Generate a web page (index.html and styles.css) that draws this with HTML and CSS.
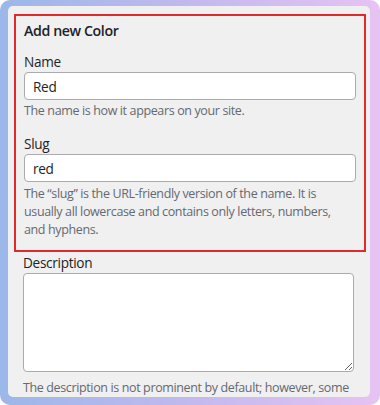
FILE: index.html
```html
<!DOCTYPE html>
<html>
<head>
<meta charset="utf-8">
<link rel="stylesheet" href="styles.css">
</head>
<body>
<div class="frame">
  <div class="panel">
    <div class="highlight">
      <h2 class="title">Add new Color</h2>
      <div class="field">
        <label class="label" for="tag-name">Name</label>
        <input class="text-input" id="tag-name" type="text" value="Red">
        <p class="help">The name is how it appears on your site.</p>
      </div>
      <div class="field field-slug">
        <label class="label" for="tag-slug">Slug</label>
        <input class="text-input" id="tag-slug" type="text" value="red">
        <p class="help">The “slug” is the URL-friendly version of the name. It is usually all lowercase and contains only letters, numbers, and hyphens.</p>
      </div>
    </div>
    <div class="field field-desc">
      <label class="label" for="tag-description">Description</label>
      <textarea class="textarea" id="tag-description"></textarea>
      <p class="help">The description is not prominent by default; however, some themes may show it.</p>
    </div>
  </div>
</div>
</body>
</html>
```

FILE: styles.css
```css
html, body {
  margin: 0;
  padding: 0;
  background: #ffffff;
}

body {
  font-family: "Open Sans", "Noto Sans", sans-serif;
  color: #1d2327;
}

.frame {
  width: 380px;
  height: 405px;
  box-sizing: border-box;
  padding: 6px 10px 8px 8px;
  border-radius: 10px;
  background: linear-gradient(90deg, #9cb7e9 0%, #c2b9ee 50%, #e6c3f3 100%);
}

.panel {
  height: 391px;
  box-sizing: border-box;
  padding: 8px 4px 0 6px;
  background: #f0f0f1;
  border-radius: 5px;
  overflow: hidden;
}

.highlight {
  border: 2px solid #e02b2b;
  padding: 5px 8px 11px 8px;
}

.title {
  margin: 0;
  font-size: 14.2px;
  line-height: 20px;
  font-weight: 600;
  letter-spacing: -0.4px;
  color: #1d2327;
}

.field {
  display: flex;
  flex-direction: column;
  margin-top: 11px;
}

.field-slug {
  margin-top: 14px;
}

.label {
  font-size: 13.6px;
  line-height: 20px;
  letter-spacing: -0.3px;
  color: #1d2327;
}

.text-input {
  box-sizing: border-box;
  width: 100%;
  height: 28px;
  margin: 0;
  padding: 0 8px;
  border: 1px solid #a9abae;
  border-radius: 4px;
  background: #ffffff;
  font-family: "Open Sans", "Noto Sans", sans-serif;
  font-size: 13.6px;
  letter-spacing: -0.3px;
  color: #1d2327;
  outline: none;
}

.help {
  margin: 2px 0 0 0;
  font-size: 12.5px;
  line-height: 18px;
  letter-spacing: -0.37px;
  color: #646970;
}

.field-slug .help {
  margin-top: 3px;
  padding-right: 12px;
}

.field-desc {
  margin: 1px 12px 0 9px;
}

.textarea {
  box-sizing: border-box;
  width: 100%;
  height: 99px;
  margin: 0;
  padding: 4px 8px;
  border: 1px solid #a9abae;
  border-radius: 4px;
  background: #ffffff;
  font-family: "Open Sans", "Noto Sans", sans-serif;
  font-size: 14px;
  resize: vertical;
  display: block;
}

.field-desc .help {
  margin-top: 7px;
}
```
